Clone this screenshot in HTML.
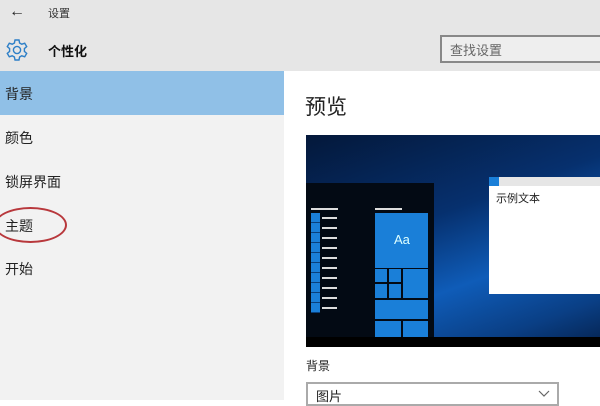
<!DOCTYPE html><html><head><meta charset="utf-8"><style>
*{margin:0;padding:0;box-sizing:border-box}
body{width:600px;height:400px;overflow:hidden;position:relative;background:#fff;font-family:"Liberation Sans","Noto Sans CJK SC",sans-serif;color:#111}
.a{position:absolute}
.item{position:absolute;left:5px;font-size:14px;color:#222}
.bl{position:absolute;background:#1a7fd8}
.ln{position:absolute;height:2px;background:#ddd}
</style></head><body>
<div class="a" style="left:0;top:0;width:600px;height:71px;background:#e6e6e6"></div>
<div class="a" style="left:0;top:71px;width:284px;height:329px;background:#f2f2f2"></div>
<div class="a" style="left:0;top:71px;width:284px;height:44px;background:#90c0e7"></div>
<div class="a" style="left:9px;top:3px;font-size:16px;color:#222">←</div>
<div class="a" style="left:48px;top:5px;font-size:11px;color:#333">设置</div>
<svg class="a" style="left:5px;top:38px" width="24" height="24" viewBox="0 0 24 24"><path d="M10 2h4l.6 3 2.2 1.2 2.9-1 2 3.4-2.3 2v2.8l2.3 2-2 3.4-2.9-1-2.2 1.2-.6 3h-4l-.6-3-2.2-1.2-2.9 1-2-3.4 2.3-2v-2.8l-2.3-2 2-3.4 2.9 1 2.2-1.2z" fill="none" stroke="#2d7fc7" stroke-width="1.4"/><circle cx="12" cy="12" r="3.6" fill="none" stroke="#2d7fc7" stroke-width="1.4"/></svg>
<div class="a" style="left:48px;top:41px;font-size:13px;font-weight:bold;color:#111">个性化</div>
<div class="a" style="left:440px;top:35px;width:170px;height:28px;border:2px solid #888;background:#eee;font-size:13px;color:#666;padding:3px 8px">查找设置</div>
<div class="item" style="top:84px">背景</div>
<div class="item" style="top:128px">颜色</div>
<div class="item" style="top:172px">锁屏界面</div>
<div class="item" style="top:216px">主题</div>
<div class="item" style="top:259px">开始</div>
<div class="a" style="left:-6px;top:207px;width:73px;height:36px;border:2px solid #b8383c;border-radius:50%"></div>
<div class="a" style="left:305px;top:91px;font-size:21px;color:#222">预览</div>
<div class="a" style="left:306px;top:135px;width:294px;height:212px;background:radial-gradient(ellipse 180px 110px at 470px 240px,#3a8ae0 0%,#0d4fa3 35%,#062c66 70%,#04183a 100%);background-position:-306px -135px;background:linear-gradient(160deg,#04183a 0%,#06306e 40%,#0f5cb8 65%,#0a3f85 85%,#05224e 100%)"></div>
<div class="a" style="left:306px;top:337px;width:294px;height:10px;background:#000"></div>
<div class="a" style="left:306px;top:183px;width:128px;height:154px;background:#030a14"></div>
<div class="ln" style="left:311px;top:208px;width:27px"></div>
<div class="ln" style="left:375px;top:208px;width:27px"></div>
<div class="bl" style="left:311px;top:213px;width:9px;height:100px"></div>
<div class="a" style="left:311px;top:213px;width:9px;height:100px;background:repeating-linear-gradient(#1a7fd8 0 9px,#0a3f7a 9px 10px)"></div>
<div class="a" style="left:322px;top:217px;width:15px;height:92px;background:repeating-linear-gradient(#ddd 0 2px,transparent 2px 10px)"></div>
<div class="bl" style="left:375px;top:213px;width:53px;height:55px"></div>
<div class="a" style="left:394px;top:232px;font-size:13px;color:#dff">Aa</div>
<div class="bl" style="left:375px;top:269px;width:12px;height:13px"></div>
<div class="bl" style="left:389px;top:269px;width:12px;height:13px"></div>
<div class="bl" style="left:375px;top:284px;width:12px;height:14px"></div>
<div class="bl" style="left:389px;top:284px;width:12px;height:14px"></div>
<div class="bl" style="left:403px;top:269px;width:25px;height:29px"></div>
<div class="bl" style="left:375px;top:300px;width:53px;height:19px"></div>
<div class="bl" style="left:375px;top:321px;width:26px;height:16px"></div>
<div class="bl" style="left:403px;top:321px;width:25px;height:16px"></div>
<div class="a" style="left:489px;top:177px;width:111px;height:117px;background:#fff"></div>
<div class="a" style="left:489px;top:177px;width:111px;height:9px;background:#e6e6e6"></div>
<div class="bl" style="left:489px;top:177px;width:10px;height:9px"></div>
<div class="a" style="left:496px;top:190px;font-size:11px;color:#222">示例文本</div>
<div class="a" style="left:306px;top:357px;font-size:12px;color:#222">背景</div>
<div class="a" style="left:306px;top:382px;width:253px;height:24px;border:2px solid #aaa;background:#fff;font-size:13px;padding:2px 8px;color:#222">图片</div>
<svg class="a" style="left:538px;top:390px" width="12" height="8"><path d="M1 1l5 5 5-5" fill="none" stroke="#666" stroke-width="1.2"/></svg>
</body></html>
